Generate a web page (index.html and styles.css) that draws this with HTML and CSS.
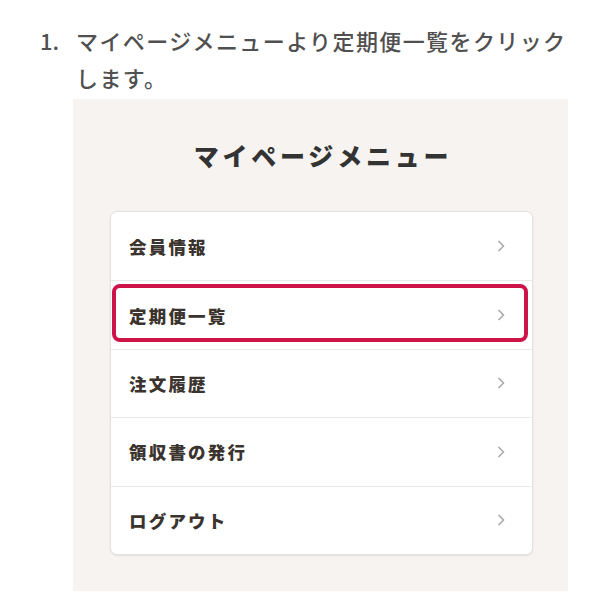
FILE: index.html
```html
<!DOCTYPE html>
<html lang="ja">
<head>
<meta charset="utf-8">
<link rel="stylesheet" href="styles.css">
</head>
<body>
<div class="step">
  <span class="num">1.</span>
  <p class="text">マイページメニューより定期便一覧をクリック<br>します。</p>
</div>
<div class="panel">
  <h2 class="title">マイページメニュー</h2>
  <ul class="card">
    <li class="row"><span class="label">会員情報</span><svg class="chev" viewBox="0 0 8 12"><path d="M1.5 1 L6.5 6 L1.5 11"/></svg></li>
    <li class="row active"><span class="label">定期便一覧</span><svg class="chev" viewBox="0 0 8 12"><path d="M1.5 1 L6.5 6 L1.5 11"/></svg><span class="mark"></span></li>
    <li class="row"><span class="label">注文履歴</span><svg class="chev" viewBox="0 0 8 12"><path d="M1.5 1 L6.5 6 L1.5 11"/></svg></li>
    <li class="row"><span class="label">領収書の発行</span><svg class="chev" viewBox="0 0 8 12"><path d="M1.5 1 L6.5 6 L1.5 11"/></svg></li>
    <li class="row"><span class="label">ログアウト</span><svg class="chev" viewBox="0 0 8 12"><path d="M1.5 1 L6.5 6 L1.5 11"/></svg></li>
  </ul>
</div>
</body>
</html>
```
FILE: styles.css
```css
html, body {
  margin: 0;
  padding: 0;
  background: #ffffff;
}
body {
  font-family: "Noto Sans CJK JP", "Noto Sans", sans-serif;
  width: 600px;
  height: 600px;
  overflow: hidden;
}
.step {
  display: flex;
  padding: 22px 0 0 40px;
  color: #505050;
  font-size: 22px;
  font-weight: 500;
  line-height: 37px;
}
.num {
  width: 36px;
  flex: none;
}
.text {
  margin: 0;
  letter-spacing: 1.4px;
}
.panel {
  margin: 3px 0 0 73px;
  width: 495px;
  height: 492px;
  box-sizing: border-box;
  background: #f6f3f1;
  padding: 38px 35px 0 37px;
}
.title {
  margin: 0 0 38px;
  text-align: center;
  font-size: 25px;
  line-height: 36px;
  font-weight: 900;
  color: #333333;
  letter-spacing: 3.8px;
  padding-left: 3px;
}
.card {
  list-style: none;
  margin: 0;
  padding: 0;
  background: #ffffff;
  border: 1px solid #e4e1df;
  border-radius: 7px;
  box-shadow: 0 1px 2px rgba(0,0,0,0.08);
}
.row {
  position: relative;
  display: flex;
  align-items: center;
  justify-content: space-between;
  height: 68.4px;
  box-sizing: border-box;
  padding: 0 27px 0 18px;
  border-top: 1px solid #ece9e7;
}
.row:first-child {
  border-top: none;
}
.label {
  font-size: 17.5px;
  font-weight: 900;
  color: #3b332e;
  letter-spacing: 2.2px;
}
.chev {
  width: 8px;
  height: 12px;
  fill: none;
  stroke: #a8a8a8;
  stroke-width: 1.5;
}
.mark {
  position: absolute;
  top: 3px;
  left: 1px;
  right: 4px;
  bottom: 7px;
  border: 4px solid #cc1448;
  border-radius: 8px;
}
```
